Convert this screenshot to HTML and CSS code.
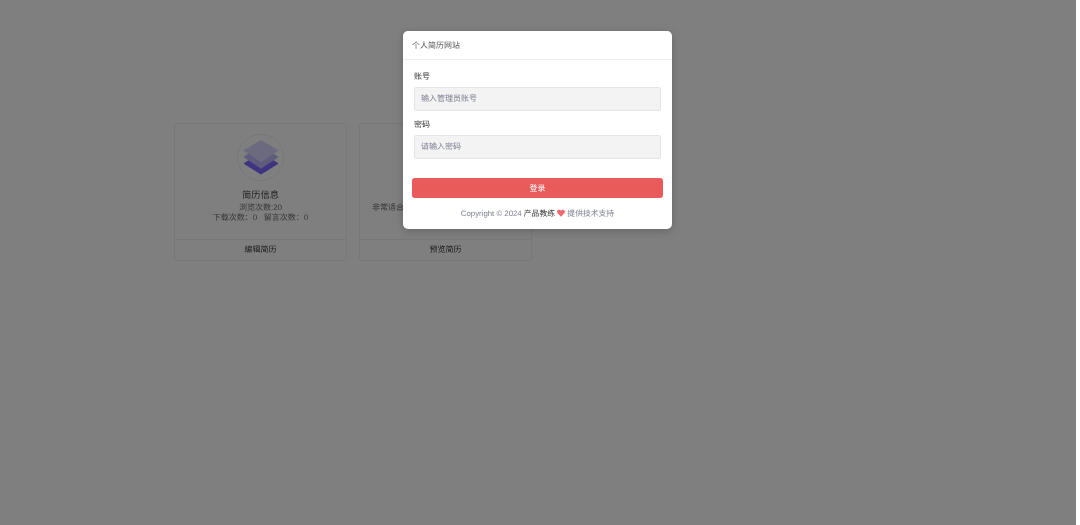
FILE: index.html
```html
<!DOCTYPE html>
<html lang="zh">
<head>
<meta charset="utf-8">
<title>个人简历网站</title>
<link rel="stylesheet" href="styles.css">
</head>
<body>
<main class="page">
  <div class="cards">
    <section class="card">
      <div class="card-body">
        <div class="avatar">
          <svg class="layers" viewBox="0 0 34 35" width="34" height="35" aria-hidden="true">
            <path class="l3" d="M17 13.500 L33 23.500 L17 33.500 L1 23.500 Z"/>
            <path class="l2" d="M17 7 L33 17 L17 27.500 L1 17 Z"/>
            <path class="l1" d="M17 1 L33 10.500 L17 21 L1 10.500 Z"/>
          </svg>
        </div>
        <h3 class="card-title">简历信息</h3>
        <p class="stat">浏览次数:20</p>
        <p class="stat">下载次数：0&nbsp;&nbsp;&nbsp;留言次数：0</p>
      </div>
      <div class="card-foot">编辑简历</div>
    </section>
    <section class="card">
      <div class="card-body card-body-plain">
        <p class="stat stat-dark">非常适合</p>
      </div>
      <div class="card-foot">预览简历</div>
    </section>
  </div>
</main>
<div class="overlay"></div>
<div class="modal">
  <header class="modal-head">个人简历网站</header>
  <form class="modal-body">
    <label class="field-label">账号</label>
    <div class="input">输入管理员账号</div>
    <label class="field-label second">密码</label>
    <div class="input">请输入密码</div>
  </form>
  <div class="btn">登录</div>
  <p class="copy">Copyright © 2024 <span class="brand">产品教练</span> <svg class="heart" viewBox="0 0 24 22" width="8" height="8" aria-hidden="true"><path d="M12 22 L2 11.500 C-1.500 7.500 0.500 1 6 1 C9 1 11 2.500 12 4.500 C13 2.500 15 1 18 1 C23.500 1 25.500 7.500 22 11.500 Z"/></svg> 提供技术支持</p>
</div>
</body>
</html>
```
FILE: styles.css
```css
* { box-sizing: border-box; }
html, body { margin: 0; height: 525px; overflow: hidden; }
body {
  background: #fff;
  font-family: "Liberation Sans", "Noto Sans CJK SC", sans-serif;
  color: #333;
  text-rendering: geometricPrecision;
}
.page { width: 1076px; height: 525px; padding: 123px 0 0 174px; }
.cards { display: flex; gap: 12px; will-change: transform; }
.card {
  width: 173px;
  height: 138px;
  border: 1px solid #eee;
  border-radius: 3px;
  display: flex;
  flex-direction: column;
}
.card-body { flex: 1; padding-top: 10px; text-align: center; }
.card-body-plain { padding: 79px 0 0 12px; text-align: left; }
.avatar {
  width: 47px; height: 47px;
  margin: 0 auto;
  border: 1px solid #eee;
  border-radius: 50%;
  display: flex; align-items: center; justify-content: center;
}
.layers path { stroke-linejoin: round; stroke-width: 2px; }
.layers .l1 { fill: #d8d4ff; stroke: #d8d4ff; }
.layers .l2 { fill: #bdb8f8; stroke: #bdb8f8; }
.layers .l3 { fill: #7c68ff; stroke: #7c68ff; }
.card-title { margin: 7px 0 0; font-size: 9.300px; line-height: 15px; font-weight: 400; color: #444; }
.stat { margin: 0; font-size: 8px; line-height: 10px; color: #6f6f75; }
.stat-dark { color: #66666c; }
.card-foot {
  height: 21px;
  border-top: 1px solid #eee;
  font-size: 8px; line-height: 20px; text-align: center; color: #333;
}
.overlay {
  position: absolute;
  left: 0; top: 0;
  width: 1076px; height: 525px;
  background: rgba(0, 0, 0, .5);
}
.modal {
  position: absolute;
  left: 403px; top: 31px;
  width: 269px; height: 198px;
  background: #fff;
  border-radius: 5px;
  box-shadow: 0 2px 8px rgba(0, 0, 0, .2);
  will-change: transform;
}
.modal-head {
  height: 29px;
  padding-left: 9px;
  border-bottom: 1px solid #eee;
  font-size: 8px; line-height: 29px; color: #555;
}
.modal-body { padding: 0 11px; }
.field-label { display: block; margin-top: 10px; font-size: 8px; line-height: 13px; color: #333; }
.field-label.second { margin-top: 7px; }
.input {
  margin-top: 4px;
  height: 24px;
  padding-left: 6px;
  border: 1px solid #e4e5ea;
  border-radius: 2px;
  background: #f3f3f4;
  font-size: 8px; line-height: 22px; color: #7d8090;
}
.btn {
  margin: 19px 9px 0;
  height: 20px;
  border-radius: 3px;
  background: #e95a5a;
  color: #fff;
  text-align: center;
  font-size: 8px; line-height: 21px;
}
.copy { margin: 10px 0 0; text-align: center; font-size: 7.800px; line-height: 12px; color: #7d8090; }
.brand { color: #333; }
.heart { fill: #f0686e; vertical-align: -1px; }
```
